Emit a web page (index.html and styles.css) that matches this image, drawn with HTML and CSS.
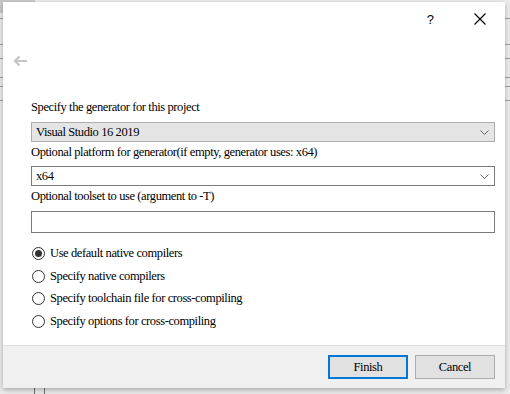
FILE: index.html
```html
<!DOCTYPE html>
<html>
<head>
<meta charset="utf-8">
<link rel="stylesheet" href="styles.css">
</head>
<body>
<div class="desk">
  <div class="dialog">
    <div class="titlebar">
      <span class="help">?</span>
      <svg class="close" width="12" height="12" viewBox="0 0 12 12"><path d="M0.5 0.5 L11.5 11.5 M11.5 0.5 L0.5 11.5" stroke="#000" stroke-width="1.1" fill="none"/></svg>
    </div>
    <div class="navbar">
      <svg class="back" width="15" height="12" viewBox="0 0 15 12"><path d="M14 6 H2.5 M6.5 1.5 L2 6 L6.5 10.5" stroke="#c4c4c4" stroke-width="2.2" fill="none"/></svg>
    </div>
    <div class="content">
      <div class="label first">Specify the generator for this project</div>
      <div class="combo combo-ro"><span>Visual Studio 16 2019</span><svg class="chev" width="9" height="5" viewBox="0 0 9 5"><path d="M0.5 0.5 L4.5 4.5 L8.5 0.5" stroke="#606060" stroke-width="1" fill="none"/></svg></div>
      <div class="label">Optional platform for generator(if empty, generator uses: x64)</div>
      <div class="combo combo-edit"><span>x64</span><svg class="chev" width="9" height="5" viewBox="0 0 9 5"><path d="M0.5 0.5 L4.5 4.5 L8.5 0.5" stroke="#606060" stroke-width="1" fill="none"/></svg></div>
      <div class="label third">Optional toolset to use (argument to -T)</div>
      <div class="textbox"></div>
      <div class="radios">
        <div class="radio"><span class="dot on"></span>Use default native compilers</div>
        <div class="radio"><span class="dot"></span>Specify native compilers</div>
        <div class="radio"><span class="dot"></span>Specify toolchain file for cross-compiling</div>
        <div class="radio"><span class="dot"></span>Specify options for cross-compiling</div>
      </div>
    </div>
    <div class="footer">
      <button class="btn primary">Finish</button>
      <button class="btn">Cancel</button>
    </div>
  </div>
</div>
</body>
</html>
```
FILE: styles.css
```css
html, body {
  margin: 0;
  padding: 0;
}
body {
  width: 510px;
  height: 394px;
  overflow: hidden;
  background-color: #ebebeb;
  background-image:
    linear-gradient(#a0a0a0, #a0a0a0),
    linear-gradient(#a0a0a0, #a0a0a0),
    linear-gradient(#a0a0a0, #a0a0a0),
    linear-gradient(#a0a0a0, #a0a0a0),
    linear-gradient(#a0a0a0, #a0a0a0),
    linear-gradient(#a0a0a0, #a0a0a0),
    linear-gradient(#707070, #707070),
    linear-gradient(#707070, #707070),
    linear-gradient(#c8c8c8, #c8c8c8);
  background-size: 510px 1px, 510px 1px, 510px 1px, 510px 1px, 510px 1px, 510px 1px, 1px 10px, 1px 10px, 35px 13px;
  background-position: 0 18px, 0 44px, 0 58px, 0 77px, 0 86px, 0 100px, 34px 386px, 44px 386px, 0 0;
  background-repeat: no-repeat;
  font-family: "Liberation Serif", "Times New Roman", serif;
  font-size: 12.5px;
  letter-spacing: -0.4px;
  color: #000;
}
.desk {
  padding: 2px 5px 0 3px;
}
.dialog {
  width: 502px;
  height: 386px;
  background: #fff;
  box-shadow: 0 2px 5px rgba(0,0,0,0.28);
  display: flex;
  flex-direction: column;
}
.titlebar {
  height: 32px;
  display: flex;
  justify-content: flex-end;
  align-items: flex-start;
  padding-top: 11px;
  box-sizing: border-box;
}
.help {
  font-family: "Liberation Sans", Arial, sans-serif;
  font-size: 13px;
  line-height: 13px;
  margin-right: 40px;
  letter-spacing: 0;
}
.close {
  margin-right: 19px;
}
.navbar {
  height: 58px;
  padding-left: 10px;
  padding-top: 21px;
  box-sizing: border-box;
}
.back {
  display: block;
}
.content {
  padding: 0 10px 0 28px;
  flex: 1;
}
.label {
  height: 24px;
  line-height: 20px;
  padding-top: 0;
  box-sizing: border-box;
  white-space: nowrap;
}
.label.first {
  height: 30px;
  padding-top: 5px;
}
.label.third {
  height: 25px;
}
.combo {
  height: 20px;
  box-sizing: border-box;
  display: flex;
  align-items: center;
  justify-content: space-between;
  padding: 0 5px 0 4px;
}
.combo-ro {
  background: #e5e5e5;
  border: 1px solid #adadad;
}
.combo-edit {
  background: #fff;
  border: 1px solid #7a7a7a;
}
.chev {
  display: block;
}
.textbox {
  height: 22px;
  box-sizing: border-box;
  border: 1px solid #7a7a7a;
  background: #fff;
}
.radios {
  padding-top: 9px;
  display: flex;
  flex-direction: column;
}
.radio {
  height: 22.7px;
  display: flex;
  align-items: center;
  white-space: nowrap;
}
.dot {
  width: 13px;
  height: 13px;
  box-sizing: border-box;
  border: 1px solid #333;
  border-radius: 50%;
  margin-left: 1px;
  margin-right: 5px;
  display: flex;
  align-items: center;
  justify-content: center;
  flex: none;
}
.dot.on::after {
  content: "";
  width: 7px;
  height: 7px;
  border-radius: 50%;
  background: #333;
}
.footer {
  height: 33px;
  flex: none;
  border-top: 1px solid #dfdfdf;
  background: #f0f0f0;
  display: flex;
  justify-content: flex-end;
  align-items: flex-start;
  padding: 9px 10px 0 0;
  gap: 7px;
}
.btn {
  width: 80px;
  height: 24px;
  box-sizing: border-box;
  background: #e1e1e1;
  border: 1px solid #adadad;
  font-family: inherit;
  font-size: inherit;
  letter-spacing: inherit;
  color: #000;
  padding: 0;
  margin: 0;
}
.btn.primary {
  border: 2px solid #0078d7;
}
```
